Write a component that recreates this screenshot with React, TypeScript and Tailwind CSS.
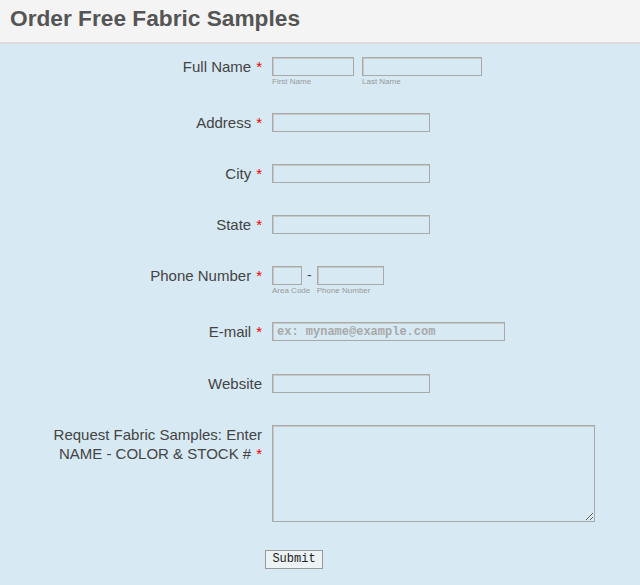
const labelCls = "w-[264px] shrink-0 pr-[2px] text-right text-[15px] leading-[19px] text-[#444]";
const inputCls = "block h-[19px] border border-[#a9a9a9] bg-transparent shadow-[inset_1px_1px_0_#c8c8c8] outline-none";
const subCls = "mt-[1px] whitespace-nowrap text-[8px] leading-[10px] text-[#999]";

function Req() {
  return <span className="ml-[5px] text-[#e00]">*</span>;
}

function Row({ label, required = true, h, children }: { label: React.ReactNode; required?: boolean; h: string; children: React.ReactNode }) {
  return (
    <div className={`flex items-start ${h}`}>
      <label className={labelCls}>
        {label}
        {required && <Req />}
      </label>
      <div className="ml-[8px] leading-none">{children}</div>
    </div>
  );
}

export default function App() {
  return (
    <div className="min-h-[585px] bg-[#d7e9f3] font-['Liberation_Sans',Arial,sans-serif]">
      <div className="h-[44px] border-b-2 border-[#dcdcdc] bg-[#f4f4f4] px-[10px] pt-[4px]">
        <h1 className="text-[22.7px] font-bold leading-[28px] text-[#555]">Order Free Fabric Samples</h1>
      </div>

      <form className="pt-[13px]" onSubmit={(e) => e.preventDefault()}>
        <Row label="Full Name" h="h-[56px]">
          <div className="flex gap-[8px]">
            <div>
              <input className={`${inputCls} w-[82px]`} />
              <div className={subCls}>First Name</div>
            </div>
            <div>
              <input className={`${inputCls} w-[120px]`} />
              <div className={subCls}>Last Name</div>
            </div>
          </div>
        </Row>

        <Row label="Address" h="h-[51px]">
          <input className={`${inputCls} w-[158px]`} />
        </Row>
        <Row label="City" h="h-[51px]">
          <input className={`${inputCls} w-[158px]`} />
        </Row>
        <Row label="State" h="h-[51px]">
          <input className={`${inputCls} w-[158px]`} />
        </Row>

        <Row label="Phone Number" h="h-[56px]">
          <div className="flex items-start">
            <div className="w-[30px]">
              <input className={`${inputCls} w-[30px]`} />
              <div className={subCls}>Area Code</div>
            </div>
            <span className="mx-[5px] text-[14px] leading-[19px] text-[#444]">-</span>
            <div className="w-[67px]">
              <input className={`${inputCls} w-[67px]`} />
              <div className={subCls}>Phone Number</div>
            </div>
          </div>
        </Row>

        <Row label="E-mail" h="h-[52px]">
          <input
            className={`${inputCls} w-[233px] pl-[4px] font-['Liberation_Mono','Courier_New',monospace] text-[12px] font-bold text-[#444] placeholder:text-[#a8a8a8]`}
            placeholder="ex: myname@example.com"
          />
        </Row>

        <Row label="Website" required={false} h="h-[51px]">
          <input className={`${inputCls} w-[158px]`} />
        </Row>

        <Row
          label={
            <>
              Request Fabric Samples: Enter
              <br />
              NAME - COLOR &amp; STOCK #
            </>
          }
          h="h-[125px]"
        >
          <textarea className="block h-[97px] w-[323px] border border-[#a9a9a9] bg-transparent shadow-[inset_1px_1px_0_#c8c8c8] outline-none" />
        </Row>

        <div className="pl-[265px]">
          <button
            type="submit"
            className="block h-[19px] w-[58px] border border-[#999] bg-[#edf2f5] font-['Liberation_Mono','Courier_New',monospace] text-[12px] leading-[17px] text-[#222]"
          >
            Submit
          </button>
        </div>
      </form>
    </div>
  );
}
